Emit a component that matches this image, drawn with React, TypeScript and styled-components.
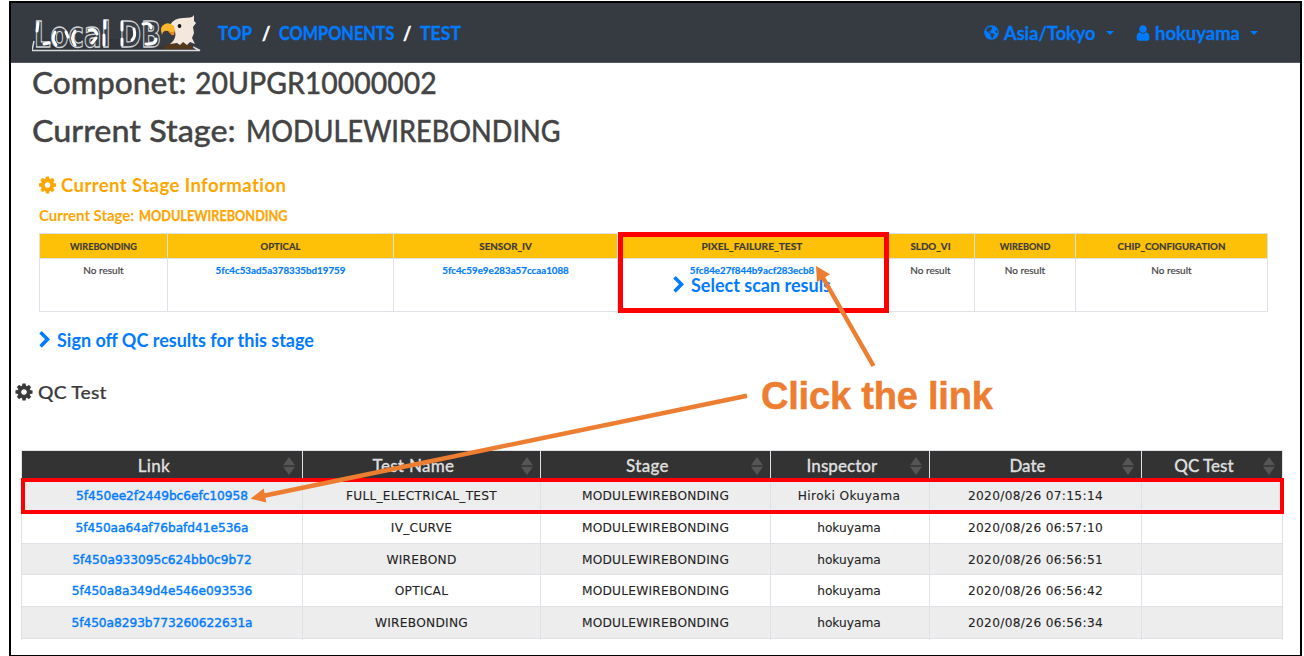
import React from "react";
import styled, { createGlobalStyle } from "styled-components";
import { FaGlobeAmericas } from "react-icons/fa";

const BLUE = "#007bff";
const UI = `Lato, "Open Sans", sans-serif`;
const DATA = `"DejaVu Sans", Verdana, sans-serif`;

const GlobalStyle = createGlobalStyle`
  * { box-sizing: border-box; }
  body { margin: 0; background: #fff; overflow: hidden; }
`;

const Page = styled.div`
  position: relative;
  width: 1304px;
  height: 656px;
  padding: 1px 2px 0 9px;
  overflow: hidden;
  background: #fff;
  font-family: ${UI};
  color: #444;
`;

const Frame = styled.div`
  height: 655px;
  border: 2px solid #000;
  border-bottom-width: 1px;
`;

const Nav = styled.nav`
  display: flex;
  align-items: center;
  height: 60px;
  padding: 0 42px 0 21px;
  background: #363a41;
  border-bottom: 1px solid #54585d;
`;

const Crumbs = styled.div`
  display: flex;
  margin-left: 16px;
  line-height: 24px;
`;

const Label = styled.span<{ $size?: number; $ls?: number; $sx?: number; $w?: number; $weight?: number; $stroke?: number }>`
  display: inline-block;
  width: ${(p) => (p.$w ? `${p.$w}px` : "auto")};
  font-size: ${(p) => p.$size ?? 18}px;
  letter-spacing: ${(p) => p.$ls ?? 0}px;
  font-weight: ${(p) => p.$weight ?? 700};
  -webkit-text-stroke: ${(p) => p.$stroke ?? 0}px;
  transform: scaleX(${(p) => p.$sx ?? 1});
  transform-origin: left center;
  white-space: nowrap;
`;

const Crumb = styled(Label)`
  color: ${BLUE};
  -webkit-text-stroke: 0.4px;
`;

const Slash = styled(Label)`
  width: 17px;
  color: #fff;
  -webkit-text-stroke: 0.4px;
`;

const NavMenus = styled.div`
  display: flex;
  align-items: center;
  gap: 22px;
  margin-left: auto;
  color: ${BLUE};
  line-height: 24px;
`;

const NavMenu = styled.div`
  display: flex;
  align-items: center;
  gap: 5px;
`;

const Caret = styled.i`
  border: 4px solid transparent;
  border-top-color: ${BLUE};
  border-bottom: 0;
`;

const Heading = styled.h1<{ $h: number }>`
  display: flex;
  margin: 0;
  padding-left: 21px;
  font-weight: 500;
  line-height: ${(p) => p.$h}px;
`;

const HeadPart = styled(Label)`
  font-size: 31.5px;
  font-weight: 500;
  -webkit-text-stroke: 0.35px;
`;

const Line = styled.div<{ $top: number; $left: number; $h: number; $gap: number; $color: string }>`
  display: flex;
  align-items: center;
  gap: ${(p) => p.$gap}px;
  height: ${(p) => p.$h}px;
  margin-top: ${(p) => p.$top}px;
  padding-left: ${(p) => p.$left}px;
  color: ${(p) => p.$color};
`;

const StageTable = styled.div`
  display: grid;
  grid-template-columns: 128px 226px 224px 269px 88px 101px 192px;
  grid-template-rows: 25px 53px;
  width: 1229px;
  margin: 8px 0 0 28px;
  border: solid #dee2e6;
  border-width: 1px 0 0 1px;
`;

const StageHead = styled.div`
  border: solid #dee2e6;
  border-width: 0 1px 1px 0;
  background: #ffc107;
  color: #3a3a3a;
  line-height: 24px;
  text-align: center;
`;

const HeadName = styled.span<{ $sx: number }>`
  display: block;
  font-size: 10px;
  font-weight: 700;
  -webkit-text-stroke: 0.2px;
  transform: scaleX(${(p) => p.$sx});
`;

const StageCell = styled.div`
  padding-top: 5px;
  border: solid #dee2e6;
  border-width: 0 1px 1px 0;
  font-size: 10px;
  line-height: 13px;
  text-align: center;
  -webkit-text-stroke: 0.2px;
`;

const Hash = styled.div`
  color: ${BLUE};
  font-weight: 700;
  transform: scaleX(0.975);
`;

const ScanLink = styled.div`
  display: flex;
  align-items: center;
  justify-content: center;
  gap: 6px;
  height: 16px;
  color: ${BLUE};
`;

const TestTable = styled.div`
  display: grid;
  grid-template-columns: 281px 238px 230px 159px 212px 141px;
  grid-template-rows: 30px 32px 32px 31px 32px 32px 1px;
  width: 1262px;
  margin: 38px 0 0 10px;
  border-left: 1px solid #dee2e6;
`;

const TestHead = styled.div`
  display: flex;
  align-items: center;
  border-right: 1px solid #dee2e6;
  border-top: 1px solid #dee2e6;
  background: #333;
  color: #dedede;
`;

const HeadText = styled.div<{ $ls: number }>`
  flex: 1;
  padding-left: 3px;
  font-size: 17px;
  font-weight: 500;
  text-align: center;
  letter-spacing: ${(p) => p.$ls}px;
  -webkit-text-stroke: 0.3px;
`;

const SortIcon = styled.svg`
  width: 12px;
  height: 18px;
  margin-right: 7px;
  flex: none;
`;

const TestCell = styled.div<{ $odd: boolean; $ls?: number; $link?: boolean; $pr?: number }>`
  padding-right: ${(p) => p.$pr ?? 0}px;
  border: solid #dee2e6;
  border-width: 0 1px 1px 0;
  background: ${(p) => (p.$odd ? "#ededed" : "#fff")};
  color: ${(p) => (p.$link ? BLUE : "#222")};
  -webkit-text-stroke: ${(p) => (p.$link ? 0.4 : 0.1)}px;
  font-family: ${DATA};
  font-size: 12.2px;
  line-height: 32px;
  letter-spacing: ${(p) => p.$ls ?? 0}px;
  text-align: center;
  white-space: nowrap;
`;

const CutOff = styled.div`
  border-right: 1px solid #dee2e6;
`;

const Highlight = styled.div<{ $x: number; $y: number; $w: number; $h: number; $b: number }>`
  position: absolute;
  left: ${(p) => p.$x}px;
  top: ${(p) => p.$y}px;
  width: ${(p) => p.$w}px;
  height: ${(p) => p.$h}px;
  border: ${(p) => p.$b}px solid #f00;
`;

const Arrows = styled.svg`
  position: absolute;
  left: 0;
  top: 0;
`;

const Callout = styled.div`
  position: absolute;
  left: 761px;
  top: 374px;
  color: #ed7d31;
  font: 700 38px/44px "Liberation Sans", Arial, sans-serif;
  letter-spacing: -0.2px;
  -webkit-text-stroke: 0.5px;
  white-space: nowrap;
`;

const Glyph = ({ d, size, w }: { d: string; size: number; w?: number }) => (
  <svg width={w ?? size} height={size} viewBox={w ? `${896 - (w / size) * 896} 0 ${(w / size) * 1792} 1792` : "0 0 1792 1792"} fill="currentColor">
    <path d={d} />
  </svg>
);

const GEAR =
  "M1152 896q0-106-75-181t-181-75-181 75-75 181 75 181 181 75 181-75 75-181zm512-109v222q0 12-8 23t-20 13l-185 28q-19 54-39 91 35 50 107 138 10 12 10 25t-9 23q-27 37-99 108t-94 71q-12 0-26-9l-138-108q-44 23-91 38-16 136-29 186-7 28-36 28h-222q-14 0-24.5-8.5t-11.5-21.5l-28-184q-49-16-90-37l-141 107q-10 9-25 9-14 0-25-11-126-114-165-168-7-10-7-23 0-12 8-23 15-21 51-66.5t54-70.5q-27-50-41-99l-183-27q-13-2-21-12.5t-8-23.5v-222q0-12 8-23t19-13l186-28q14-46 39-92-40-57-107-138-10-12-10-24 0-10 9-23 26-36 98.5-107.5t94.5-71.5q13 0 26 10l138 107q44-23 91-38 16-136 29-186 7-28 36-28h222q14 0 24.5 8.5t11.5 21.5l28 184q49 16 90 37l142-107q9-9 24-9 13 0 25 10 129 119 165 170 7 8 7 22 0 12-8 23-15 21-51 66.5t-54 70.5q26 50 41 98l183 28q13 2 21 12.5t8 23.5z";
const CHEVRON =
  "M1363 877l-742 742q-19 19-45 19t-45-19l-166-166q-19-19-19-45t19-45l531-531-531-531q-19-19-19-45t19-45l166-166q19-19 45-19t45 19l742 742q19 19 19 45t-19 45z";
const USER =
  "M1536 1399q0 109-62.5 187t-150.5 78h-854q-88 0-150.5-78t-62.5-187q0-85 8.5-160.5t31.5-152 58.5-131 94-89 134.5-34.5q131 128 313 128t313-128q76 0 134.5 34.5t94 89 58.5 131 31.5 152 8.5 160.5zm-256-887q0 159-112.5 271.5t-271.5 112.5-271.5-112.5-112.5-271.5 112.5-271.5 271.5-112.5 271.5 112.5 112.5 271.5z";

const Logo = () => (
  <svg width="170" height="56" viewBox="0 -8 170 56">
    <path d="M2 26L0 37.500H168L161 34H130L100 26Z" fill="#30363c" />
    <text
      x="2"
      y="33.500"
      fontFamily="DejaVu Sans"
      fontWeight="700"
      fontSize="35"
      fill="#3a4046"
      stroke="#cfd2d4"
      strokeWidth="1.300"
      textLength="127"
      lengthAdjust="spacingAndGlyphs"
    >
      Local DB
    </text>
    <g fill="none" stroke="#fff" strokeWidth="3" strokeLinecap="round">
      <path d="M6 10L5 18M12 31L17 30M23 19Q19 26 24 32M34 19L36 24M43 18Q38 25 43 32M57 17Q63 15 65 21M60 30L64 25M73 8V15M72 22V32M90 9V17M90 26V32M100 27Q104 24 102 16M111 11Q119 9 119 15M114 31Q124 32 124 26" />
    </g>
    <path d="M0 37.500L2 28M0 37.500H168L161 34" fill="none" stroke="#d8dadb" strokeWidth="1.500" />
    <path d="M130 36Q136 30 141 30L147 32L153 29L162 35V36Z" fill="#55371c" />
    <path d="M138 31Q145 26 143 18L138 12Q142 5 151 5L158 4.500Q161 4 162 2V8L164 10L161 14L162 20L160 25L163 31L158 29L155 32L151 29L148 32L145 30Z" fill="#f4e8dc" />
    <path d="M130 22Q127 13 133 11Q137 9 142 13L143 18Q141 21 136 18Q131 17 130 22Z" fill="#f8b72c" />
    <path d="M136 18Q141 21 143 17L142 22Q139 23 136 18Z" fill="#f08a24" />
    <circle cx="147.500" cy="13" r="1.900" fill="#16181a" />
  </svg>
);

const stages: { name: string; sx: number; hash?: string; scan?: boolean }[] = [
  { name: "WIREBONDING", sx: 0.91 },
  { name: "OPTICAL", sx: 0.95, hash: "5fc4c53ad5a378335bd19759" },
  { name: "SENSOR_IV", sx: 0.98, hash: "5fc4c59e9e283a57ccaa1088" },
  { name: "PIXEL_FAILURE_TEST", sx: 1.02, hash: "5fc84e27f844b9acf283ecb8", scan: true },
  { name: "SLDO_VI", sx: 0.98 },
  { name: "WIREBOND", sx: 0.91 },
  { name: "CHIP_CONFIGURATION", sx: 0.97 },
];

const heads: [string, number][] = [
  ["Link", 0.3],
  ["Test Name", 0.3],
  ["Stage", 0.3],
  ["Inspector", 0.05],
  ["Date", 0],
  ["QC Test", 0],
];

const rows = [
  ["5f450ee2f2449bc6efc10958", "FULL_ELECTRICAL_TEST", "Hiroki Okuyama", "2020/08/26 07:15:14"],
  ["5f450aa64af76bafd41e536a", "IV_CURVE", "hokuyama", "2020/08/26 06:57:10"],
  ["5f450a933095c624bb0c9b72", "WIREBOND", "hokuyama", "2020/08/26 06:56:51"],
  ["5f450a8a349d4e546e093536", "OPTICAL", "hokuyama", "2020/08/26 06:56:42"],
  ["5f450a8293b773260622631a", "WIREBONDING", "hokuyama", "2020/08/26 06:56:34"],
];

export default function App() {
  return (
    <Page>
      <GlobalStyle />
      <Frame>
        <Nav>
          <Logo />
          <Crumbs>
            <Crumb $w={44} $sx={0.94}>TOP</Crumb>
            <Slash>/</Slash>
            <Crumb $w={124} $sx={0.905}>COMPONENTS</Crumb>
            <Slash>/</Slash>
            <Crumb $w={42} $sx={0.98}>TEST</Crumb>
          </Crumbs>
          <NavMenus>
            <NavMenu>
              <FaGlobeAmericas size={15} />
              <Label $w={97} $sx={1.01} $stroke={0.3}>Asia/Tokyo</Label>
              <Caret />
            </NavMenu>
            <NavMenu>
              <Glyph d={USER} size={18} w={14} />
              <Label $w={90} $sx={1.025} $stroke={0.3}>hokuyama</Label>
              <Caret />
            </NavMenu>
          </NavMenus>
        </Nav>
        <Heading $h={38}>
          <HeadPart $w={163} $sx={1.005}>Componet:</HeadPart>
          <HeadPart $sx={0.903}>20UPGR10000002</HeadPart>
        </Heading>
        <Heading as="h2" $h={58}>
          <HeadPart $w={213.5} $sx={1.025}>Current Stage:</HeadPart>
          <HeadPart $sx={0.86}>MODULEWIREBONDING</HeadPart>
        </Heading>
        <Line $top={6} $left={27} $h={40} $gap={4} $color="#ffa500">
          <Glyph d={GEAR} size={20} w={19} />
          <Label $ls={0.4} $sx={1.03}>Current Stage Information</Label>
        </Line>
        <Line $top={0} $left={28} $h={20} $gap={0} $color="#ffa500">
          <Label $size={14.5} $w={99.5} $sx={1.03}>Current Stage:</Label>
          <Label $size={14.5} $sx={0.875} $stroke={0.25}>MODULEWIREBONDING</Label>
        </Line>
        <StageTable>
          {stages.map((s) => (
            <StageHead key={s.name}>
              <HeadName $sx={s.sx}>{s.name}</HeadName>
            </StageHead>
          ))}
          {stages.map((s) => (
            <StageCell key={s.name}>
              {s.hash ? <Hash>{s.hash}</Hash> : "No result"}
              {s.scan && (
                <ScanLink>
                  <Glyph d={CHEVRON} size={18} w={12} />
                  <Label>Select scan resuls</Label>
                </ScanLink>
              )}
            </StageCell>
          ))}
        </StageTable>
        <Line $top={8} $left={28} $h={40} $gap={6} $color={BLUE}>
          <Glyph d={CHEVRON} size={18} w={12} />
          <Label>Sign off QC results for this stage</Label>
        </Line>
        <Line $top={12} $left={3} $h={40} $gap={4} $color="#3a3a3a">
          <Glyph d={GEAR} size={20} w={20} />
          <Label $weight={500} $ls={0.2} $sx={1.07} $stroke={0.2}>QC Test</Label>
        </Line>
        <TestTable>
          {heads.map(([h, ls]) => (
            <TestHead key={h}>
              <HeadText $ls={ls}>{h}</HeadText>
              <SortIcon viewBox="0 0 12 18">
                <path d="M6 0L12 8.300H0ZM6 18L12 9.700H0Z" fill="#555" />
              </SortIcon>
            </TestHead>
          ))}
          {rows.map(([hash, name, who, date], i) => (
            <React.Fragment key={hash}>
              <TestCell $odd={i % 2 === 0} $ls={-0.04} $link>{hash}</TestCell>
              <TestCell $odd={i % 2 === 0} $ls={0.26}>{name}</TestCell>
              <TestCell $odd={i % 2 === 0} $ls={0.24}>MODULEWIREBONDING</TestCell>
              <TestCell $odd={i % 2 === 0} $ls={who === "hokuyama" ? 0 : 0.4} $pr={2}>{who}</TestCell>
              <TestCell $odd={i % 2 === 0} $ls={0.33}>{date}</TestCell>
              <TestCell $odd={i % 2 === 0} />
            </React.Fragment>
          ))}
          {heads.map(([h]) => (
            <CutOff key={h} />
          ))}
        </TestTable>
      </Frame>
      <Highlight $x={618} $y={232} $w={271} $h={81} $b={5} />
      <Highlight $x={21} $y={478} $w={1263} $h={36} $b={4} />
      <Arrows width="1304" height="656">
        <g stroke="#ed7d31" strokeWidth="4.500" fill="#ed7d31">
          <path d="M873.500 366L822 276M747 395.700L264 495.800" />
          <path stroke="none" d="M816 266L830 274.300L817 282.300ZM250.500 498.700L263.700 488.500L266.300 502.500Z" />
        </g>
      </Arrows>
      <Callout>Click the link</Callout>
    </Page>
  );
}
